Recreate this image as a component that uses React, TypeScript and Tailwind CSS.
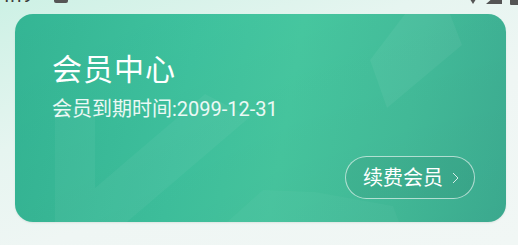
import React from "react";

export default function App() {
  return (
    <div
      className="w-[518px] h-[245px] overflow-hidden bg-[linear-gradient(160deg,#cdf1e5_0%,#e6f5f0_35%,#eff6f4_60%,#f1f7f5_100%)]"
      style={{ fontFamily: "Roboto, 'Noto Sans CJK SC', sans-serif" }}
    >
      {/* status bar (clipped) */}
      <div className="h-[14px] overflow-hidden">
        <div className="-mt-[11px] flex items-center justify-between h-[16px] px-[2px] text-[#3a3a3a]">
          <div className="flex items-center gap-[22px]">
            <span className="text-[15px] font-medium leading-none">1:19</span>
            <span className="w-[14px] h-[12px] rounded-[2px] bg-[#555]" />
          </div>
          <div className="flex items-center gap-[8px] pr-0 -mr-[6px]">
            <svg width="10" height="14" viewBox="0 0 10 14"><path d="M0 6 L10 6 L5 14 Z" fill="#555" /></svg>
            <svg width="16" height="14" viewBox="0 0 16 14"><path d="M0 14 L16 0 L16 14 Z" fill="#555" /></svg>
            <span className="w-[12px] h-[16px] bg-[#555] rounded-[1px]" />
          </div>
        </div>
      </div>

      {/* card */}
      <div className="relative mx-[15px] w-[491px] h-[208px] rounded-[18px] overflow-hidden shadow-[0_1px_2px_rgba(0,0,0,0.08)] bg-[linear-gradient(100deg,#34b594_0%,#3fc39f_35%,#47c9a1_55%,#44bf9c_78%,#3eb195_100%)]">
        <svg
          className="absolute inset-0"
          width="491"
          height="208"
          viewBox="0 0 491 208"
        >
          <defs>
            <linearGradient id="shade" x1="0" y1="0" x2="1" y2="1">
              <stop offset="0" stopColor="#000" stopOpacity="0" />
              <stop offset="1" stopColor="#000" stopOpacity="0.05" />
            </linearGradient>
          </defs>
          <rect x="0" y="0" width="491" height="208" fill="url(#shade)" />
          <polygon points="40,94 80,94 80,174 190,80 235,103 112,208 40,208" fill="#ffffff" fillOpacity="0.045" />
          <polygon points="212,208 248,176 300,178 378,192 384,208" fill="#ffffff" fillOpacity="0.03" />
          <polygon points="390,0 435,0 447,31 372,94 355,46" fill="#ffffff" fillOpacity="0.05" />
        </svg>

        <div className="relative flex flex-col h-full pl-[37px] pt-[39px] pr-[31px] pb-[23px]">
          <div className="text-white text-[30px] leading-[34px] tracking-[1px]">会员中心</div>
          <div className="text-white/90 text-[20px] leading-[24px] mt-[10px]">会员到期时间:2099-12-31</div>
          <div className="flex-1" />
          <div className="flex justify-end">
            <div className="flex items-center h-[43px] w-[130px] rounded-full border-[1.5px] border-white/60 bg-black/5 pl-[17px] text-white">
              <span className="text-[20px] leading-none">续费会员</span>
              <svg className="ml-[9px]" width="7" height="12" viewBox="0 0 7 12">
                <path d="M1 1 L6 6 L1 11" fill="none" stroke="#ffffff" strokeOpacity="0.8" strokeWidth="1" />
              </svg>
            </div>
          </div>
        </div>
      </div>
    </div>
  );
}
